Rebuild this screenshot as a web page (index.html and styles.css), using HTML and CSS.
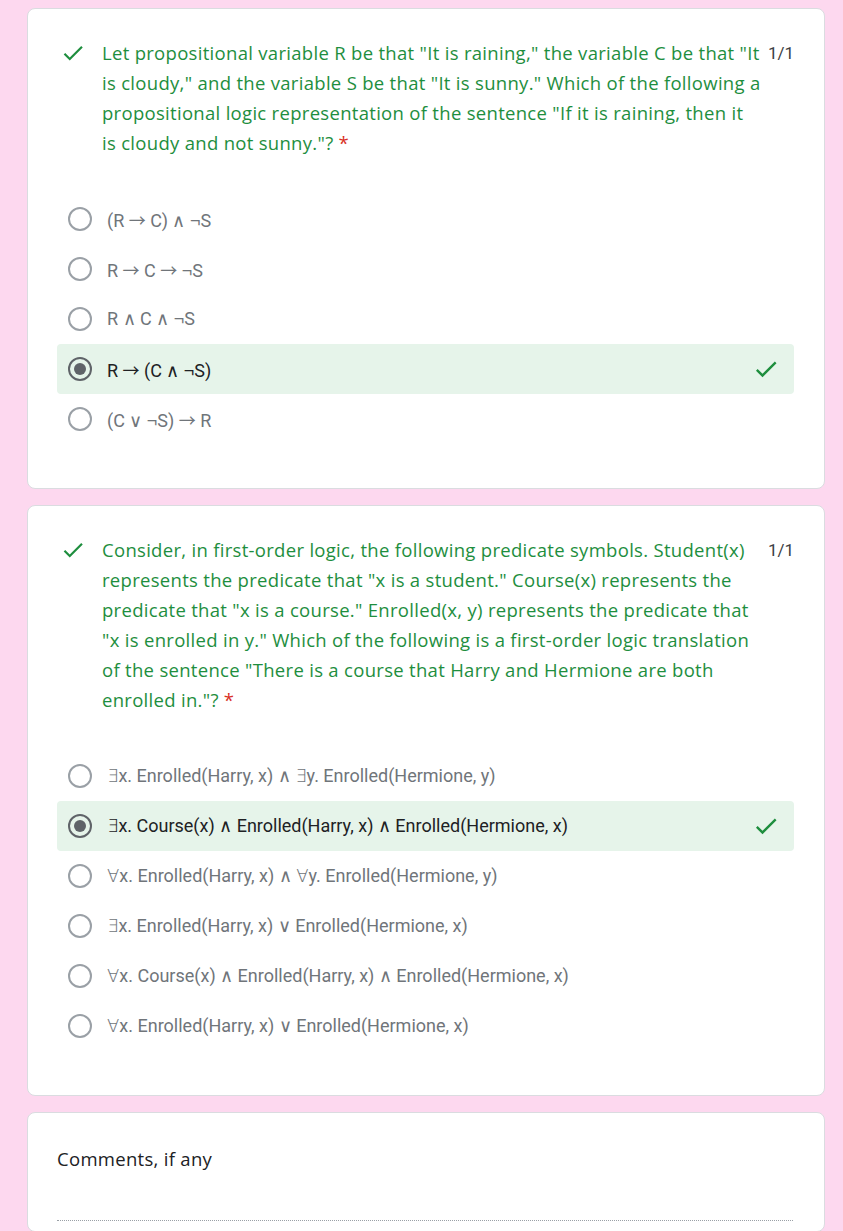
FILE: index.html
```html
<!DOCTYPE html>
<html lang="en">
<head>
<meta charset="utf-8">
<title>Quiz</title>
<link rel="stylesheet" href="styles.css">
</head>
<body>
<main class="page">
  <section class="card">
    <div class="q-head">
      <svg class="q-check" viewBox="0 0 24 24"><path d="M9 16.17L4.83 12l-1.42 1.41L9 19 21 7l-1.41-1.41z"/></svg>
      <div class="q-title">Let propositional variable R be that "It is raining," the variable C be that "It is cloudy," and the variable S be that "It is sunny." Which of the following a propositional logic representation of the sentence "If it is raining, then it<br>is cloudy and not sunny."? <span class="req">*</span></div>
      <div class="score">1/1</div>
    </div>
    <ul class="options">
      <li class="opt"><span class="radio"></span><span class="opt-text">(R <span class="arr">→</span> C) <span class="sym">∧</span> <span class="sym">¬</span>S</span></li>
      <li class="opt"><span class="radio"></span><span class="opt-text">R <span class="arr">→</span> C <span class="arr">→</span> <span class="sym">¬</span>S</span></li>
      <li class="opt"><span class="radio"></span><span class="opt-text">R <span class="sym">∧</span> C <span class="sym">∧</span> <span class="sym">¬</span>S</span></li>
      <li class="opt selected"><span class="radio on"></span><span class="opt-text">R <span class="arr">→</span> (C <span class="sym">∧</span> <span class="sym">¬</span>S)</span><svg class="opt-check" viewBox="0 0 24 24"><path d="M9 16.17L4.83 12l-1.42 1.41L9 19 21 7l-1.41-1.41z"/></svg></li>
      <li class="opt"><span class="radio"></span><span class="opt-text">(C <span class="sym">∨</span> <span class="sym">¬</span>S) <span class="arr">→</span> R</span></li>
    </ul>
  </section>

  <section class="card">
    <div class="q-head">
      <svg class="q-check" viewBox="0 0 24 24"><path d="M9 16.17L4.83 12l-1.42 1.41L9 19 21 7l-1.41-1.41z"/></svg>
      <div class="q-title">Consider, in first-order logic, the following predicate symbols. Student(x) represents the predicate that "x is a student." Course(x) represents the predicate that "x is a course." Enrolled(x, y) represents the predicate that "x is enrolled in y." Which of the following is a first-order logic translation of the sentence "There is a course that Harry and Hermione are both enrolled in."? <span class="req">*</span></div>
      <div class="score">1/1</div>
    </div>
    <ul class="options">
      <li class="opt"><span class="radio"></span><span class="opt-text"><span class="sym">∃</span>x. Enrolled(Harry, x) <span class="sym">∧</span> <span class="sym">∃</span>y. Enrolled(Hermione, y)</span></li>
      <li class="opt selected"><span class="radio on"></span><span class="opt-text"><span class="sym">∃</span>x. Course(x) <span class="sym">∧</span> Enrolled(Harry, x) <span class="sym">∧</span> Enrolled(Hermione, x)</span><svg class="opt-check" viewBox="0 0 24 24"><path d="M9 16.17L4.83 12l-1.42 1.41L9 19 21 7l-1.41-1.41z"/></svg></li>
      <li class="opt"><span class="radio"></span><span class="opt-text"><span class="sym">∀</span>x. Enrolled(Harry, x) <span class="sym">∧</span> <span class="sym">∀</span>y. Enrolled(Hermione, y)</span></li>
      <li class="opt"><span class="radio"></span><span class="opt-text"><span class="sym">∃</span>x. Enrolled(Harry, x) <span class="sym">∨</span> Enrolled(Hermione, x)</span></li>
      <li class="opt"><span class="radio"></span><span class="opt-text"><span class="sym">∀</span>x. Course(x) <span class="sym">∧</span> Enrolled(Harry, x) <span class="sym">∧</span> Enrolled(Hermione, x)</span></li>
      <li class="opt"><span class="radio"></span><span class="opt-text"><span class="sym">∀</span>x. Enrolled(Harry, x) <span class="sym">∨</span> Enrolled(Hermione, x)</span></li>
    </ul>
  </section>

  <section class="card comments">
    <div class="c-title">Comments, if any</div>
    <div class="c-line"></div>
  </section>
</main>
</body>
</html>
```

FILE: styles.css
```css
html, body {
  margin: 0;
  padding: 0;
  background: #fdd8ef;
}
body {
  font-family: "Open Sans", "Noto Sans", sans-serif;
}
.page {
  width: 798px;
  margin: 0 0 0 27px;
  padding-top: 8px;
  display: flex;
  flex-direction: column;
  gap: 16px;
}
.card {
  background: #fff;
  border: 1px solid #dadce0;
  border-radius: 8px;
  padding: 29px 30px 44px 29px;
}
.q-head {
  display: flex;
  align-items: flex-start;
}
.q-check {
  width: 26px;
  height: 26px;
  fill: #1e8e3e;
  margin: 2px 0 0 3px;
  flex: none;
}
.q-title {
  flex: 1;
  margin-left: 16px;
  font-size: 18.5px;
  letter-spacing: 0.3px;
  line-height: 30px;
  color: #1e8e3e;
}
.req {
  color: #d93025;
}
.score {
  flex: none;
  margin-left: 4px;
  font-family: Roboto, sans-serif;
  font-size: 17px;
  line-height: 30px;
  color: #3c4043;
}
.options {
  list-style: none;
  margin: 36px 0 0 0;
  padding: 0;
}
.opt {
  height: 50px;
  display: flex;
  align-items: center;
  padding: 0 14px 0 11px;
  border-radius: 4px;
  font-family: Roboto, sans-serif;
  font-size: 18px;
  color: #70757a;
}
.opt.selected {
  background: #e6f4ea;
  color: #202124;
}
.sym {
  font-family: "Liberation Sans", "DejaVu Sans", sans-serif;
  font-weight: 300;
}
.arr {
  font-family: "Noto Sans CJK JP", "DejaVu Sans", sans-serif;
  font-size: 17px;
}
.radio {
  width: 20px;
  height: 20px;
  border: 2px solid #9aa0a6;
  border-radius: 50%;
  flex: none;
  display: flex;
  align-items: center;
  justify-content: center;
}
.radio.on {
  border-color: #5f6368;
}
.radio.on::after {
  content: "";
  width: 12px;
  height: 12px;
  border-radius: 50%;
  background: #5f6368;
}
.opt-text {
  margin-left: 15px;
  flex: 1;
}
.opt-check {
  width: 28px;
  height: 28px;
  fill: #1e8e3e;
  flex: none;
}
.comments {
  padding: 31px 31px 10px 29px;
}
.c-title {
  font-size: 18.5px;
  letter-spacing: 0.3px;
  line-height: 30px;
  color: #202124;
}
.c-line {
  margin-top: 46px;
  border-bottom: 1px dotted #9aa0a6;
}
```
